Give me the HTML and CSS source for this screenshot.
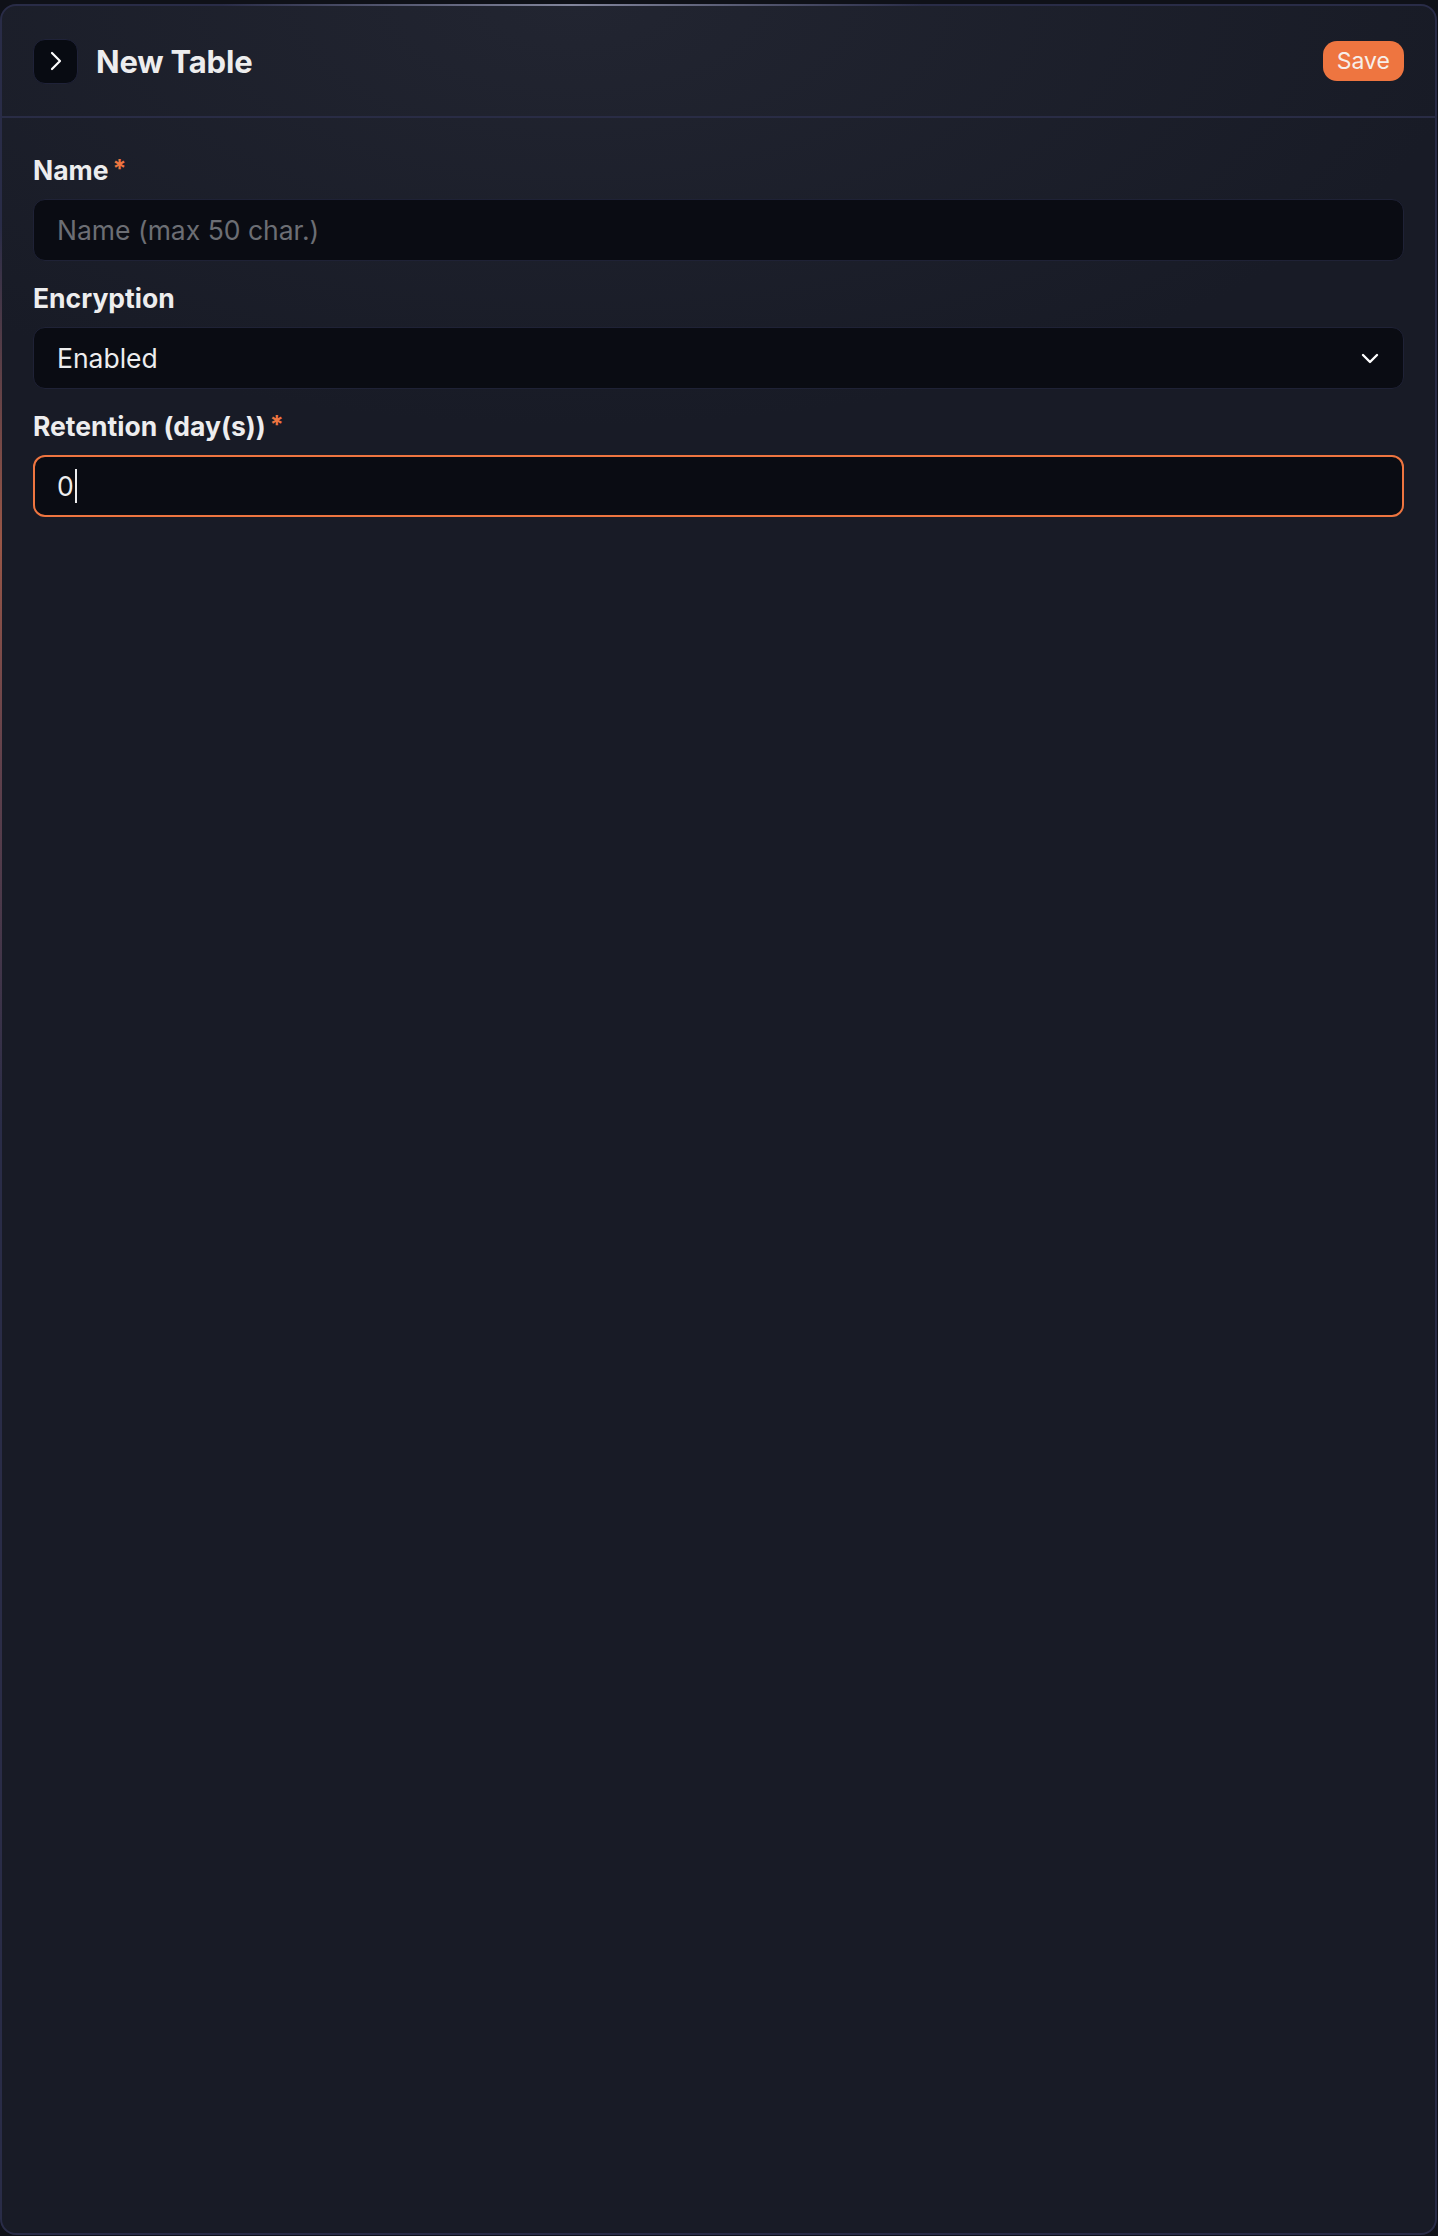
FILE: index.html
```html
<!DOCTYPE html>
<html lang="en">
<head>
  <meta charset="UTF-8">
  <meta name="viewport" content="width=device-width, initial-scale=1.0">
  <title>New Table</title>
  <link rel="stylesheet" href="styles.css">
</head>
<body>
  <!-- 패널: 헤더 + 폼 -->
  <div class="panel">
    <div class="panel-header">
      <div class="header-left">
        <button class="toggle-btn" type="button">
          <svg width="14" height="20" viewBox="0 0 14 20" xmlns="http://www.w3.org/2000/svg">
            <polyline points="3,2 11,10 3,18" stroke="white" stroke-width="2.2" stroke-linecap="round" stroke-linejoin="round" fill="none"/>
          </svg>
        </button>
        <h1 class="title">New Table</h1>
      </div>
      <button class="save-btn" type="button">Save</button>
    </div>

    <form class="form">
      <div class="field">
        <label class="label">Name<span class="required">*</span></label>
        <input class="input" type="text" placeholder="Name (max 50 char.)">
      </div>

      <div class="field">
        <label class="label">Encryption</label>
        <div class="select">
          <span>Enabled</span>
          <svg width="18" height="11" viewBox="0 0 18 11" xmlns="http://www.w3.org/2000/svg">
            <polyline points="2,2 9,9 16,2" stroke="white" stroke-width="2.4" stroke-linecap="round" stroke-linejoin="round" fill="none"/>
          </svg>
        </div>
      </div>

      <div class="field">
        <label class="label">Retention (day(s))<span class="required">*</span></label>
        <div class="input is-focused">0<span class="caret"></span></div>
      </div>
    </form>
  </div>
</body>
</html>
```

FILE: styles.css
```css
* {
  box-sizing: border-box;
}
body {
  margin: 0;
  background: #0f1118;
  font-family: Inter, "Noto Sans", sans-serif;
  color: #ededee;
  height: 100vh;
  display: flex;
  flex-direction: column;
}
/* 패널: 둥근 모서리, 위쪽 은은한 빛 */
.panel {
  position: relative;
  flex: 1;
  margin: 4px 1px 1px 0;
  border: 2px solid #292c47;
  border-radius: 16px;
  background:
    radial-gradient(ellipse 900px 420px at 40% 0%, rgba(42, 45, 58, 0.55), rgba(24, 27, 38, 0) 100%),
    #181b26;
  display: flex;
  flex-direction: column;
}
/* 왼쪽 테두리의 주황색 빛 */
.panel::before {
  content: "";
  position: absolute;
  left: -2px;
  top: 220px;
  width: 2px;
  height: 900px;
  background: linear-gradient(to bottom, rgba(238, 117, 64, 0), rgba(190, 100, 70, 0.75) 35%, rgba(150, 85, 80, 0.5) 60%, rgba(41, 44, 71, 0));
}
/* 위쪽 테두리 하이라이트 */
.panel::after {
  content: "";
  position: absolute;
  top: -2px;
  left: 220px;
  width: 700px;
  height: 2px;
  background: linear-gradient(to right, rgba(120, 124, 150, 0), rgba(140, 143, 165, 0.9) 50%, rgba(120, 124, 150, 0));
}
.panel-header {
  height: 112px;
  padding: 0 31px;
  display: flex;
  align-items: center;
  justify-content: space-between;
  border-bottom: 2px solid #292c45;
}
.header-left {
  display: flex;
  align-items: center;
  gap: 18px;
}
.toggle-btn {
  width: 45px;
  height: 45px;
  border-radius: 12px;
  background: #080b12;
  border: 1px solid #1f2238;
  display: flex;
  align-items: center;
  justify-content: center;
  padding: 0;
}
.title {
  margin: 0;
  font-size: 31px;
  font-weight: 700;
  color: #ededee;
  letter-spacing: -0.2px;
}
.save-btn {
  height: 40px;
  padding: 0 14px;
  border: none;
  border-radius: 14px;
  background: #ee7540;
  color: #f7efe9;
  font-family: Inter, "Noto Sans", sans-serif;
  font-size: 23px;
}
.form {
  padding: 37px 31px 0;
  display: flex;
  flex-direction: column;
  gap: 22px;
}
.field {
  display: flex;
  flex-direction: column;
  gap: 14px;
}
.label {
  font-size: 26.5px;
  line-height: 30px;
  font-weight: 700;
  color: #ededee;
}
.required {
  color: #ee7540;
  margin-left: 4px;
  font-size: 25px;
  line-height: 0;
  position: relative;
  top: -2px;
}
.input,
.select {
  height: 62px;
  width: 100%;
  border-radius: 12px;
  background: #0a0c13;
  border: 1px solid #1f2236;
  padding: 0 23px;
  font-family: Inter, "Noto Sans", sans-serif;
  font-size: 26.5px;
  color: #ededee;
  outline: none;
}
.input::placeholder {
  color: #6c6e74;
}
.select {
  display: flex;
  align-items: center;
  justify-content: space-between;
  padding-right: 24px;
}
.is-focused {
  display: flex;
  align-items: center;
  border: 2px solid #ee7540;
  padding-left: 22px;
}
.caret {
  display: inline-block;
  width: 2px;
  height: 34px;
  background: #ededee;
  margin-left: 1px;
}
```
